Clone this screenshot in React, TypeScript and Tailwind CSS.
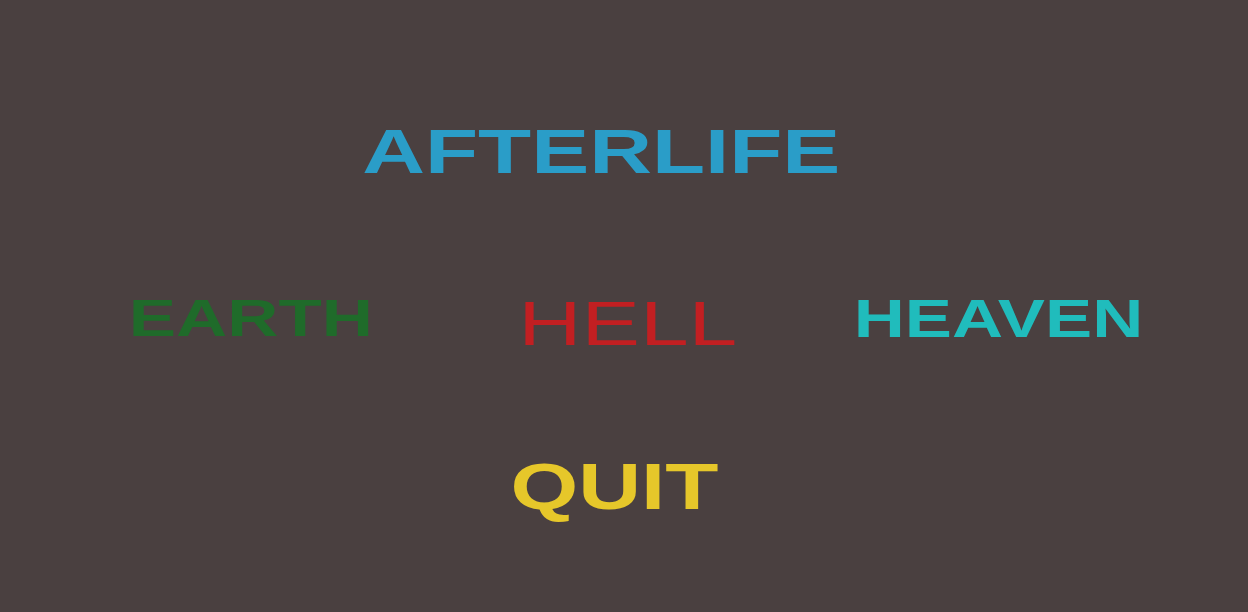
const font = { fontFamily: '"Liberation Sans", Arial, sans-serif' }

function Word({ text, className }: { text: string; className: string }) {
  return (
    <span className={`inline-block origin-center leading-none whitespace-nowrap ${className}`}>
      {text}
    </span>
  )
}

export default function App() {
  return (
    <div className="flex h-[612px] w-full flex-col overflow-hidden bg-[#4a4040]" style={font}>
      <div className="flex justify-center pt-[120px] pr-[46px]">
        <Word text="AFTERLIFE" className="scale-x-[1.38] text-[63px] font-bold text-[#2a9dc8]" />
      </div>

      <div className="mt-[107px] flex items-start pl-[66px]">
        <div className="flex w-[370px] justify-center pt-[3px]">
          <Word text="EARTH" className="scale-x-[1.39] text-[51px] font-bold text-[#1f6b2a]" />
        </div>
        <div className="ml-[7px] flex w-[370px] justify-center pt-[2px]">
          <Word text="HELL" className="scale-x-[1.39] text-[63px] font-normal text-[#c21f22]" />
        </div>
        <div className="ml-[1px] flex w-[370px] justify-center pt-[1px]">
          <Word text="HEAVEN" className="scale-x-[1.31] text-[54px] font-bold text-[#20bcbc]" />
        </div>
      </div>

      <div className="mt-[100px] flex justify-center pr-[19px]">
        <Word text="QUIT" className="scale-x-[1.36] text-[64px] font-bold text-[#e6c72a]" />
      </div>
    </div>
  )
}
